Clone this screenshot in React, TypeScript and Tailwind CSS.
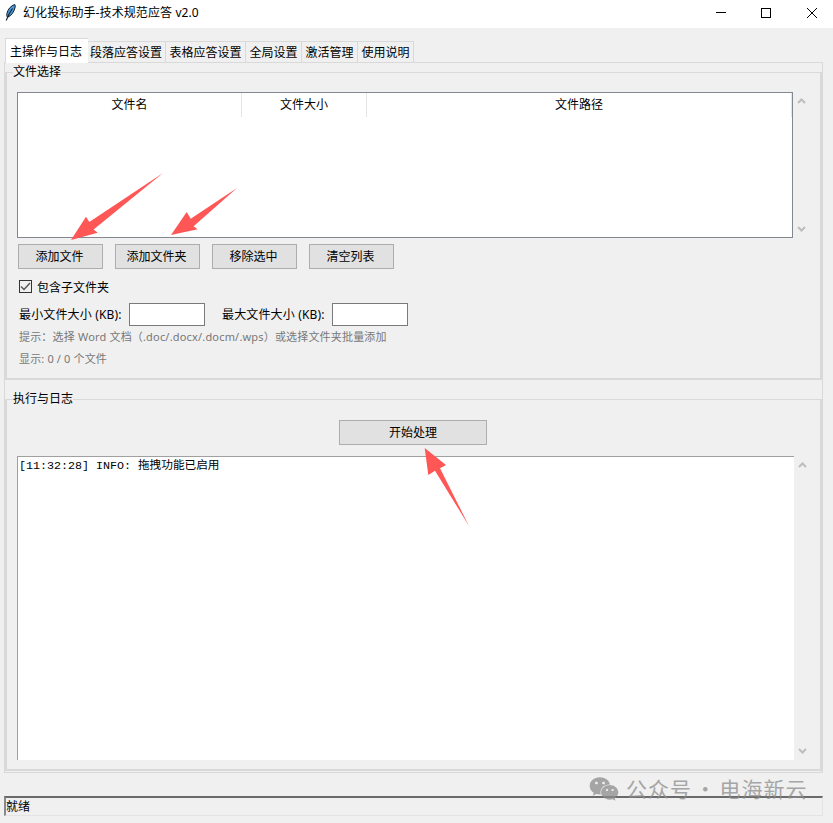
import { FaWeixin } from 'react-icons/fa';

const tabs = [
  { label: '段落应答设置', w: 'w-[78px] pr-[1px]' },
  { label: '表格应答设置', w: 'w-[80px]' },
  { label: '全局设置', w: 'w-[56px]' },
  { label: '激活管理', w: 'w-[56px]' },
  { label: '使用说明', w: 'w-[56px]' },
];

const fileButtons = ['添加文件', '添加文件夹', '移除选中', '清空列表'];

function ScrollArrows() {
  return (
    <div className="w-[17px] py-[6px] flex flex-col justify-between items-center">
      <svg width="9" height="6" viewBox="0 0 9 6" fill="none" stroke="#bdbdbd" strokeWidth="2">
        <path d="M1 5l3.5-3.5L8 5" />
      </svg>
      <svg width="9" height="6" viewBox="0 0 9 6" fill="none" stroke="#bdbdbd" strokeWidth="2">
        <path d="M1 1l3.5 3.5L8 1" />
      </svg>
    </div>
  );
}

function TkButton({ label, className }: { label: string; className: string }) {
  return (
    <button className={`h-[25px] bg-[#e1e1e1] border border-[#adadad] text-black text-center leading-[22px] ${className}`}>
      {label}
    </button>
  );
}

export default function App() {
  return (
    <div className="relative w-[833px] h-[823px] overflow-hidden bg-[#f0f0f0] text-[12px] text-black flex flex-col font-['Noto_Sans','Noto_Sans_CJK_SC',sans-serif]">
      {/* Title bar */}
      <div className="h-[28px] pb-[3px] bg-white flex items-center justify-between shrink-0">
        <div className="flex items-center pl-[5px]">
          <svg width="11" height="17" viewBox="0 0 11 17" className="mr-[7px]">
            <path d="M9.8 0.500C6 1.600 2.800 5.200 1.900 9.500c-.3 1.600-.1 3 .6 3.800C6.400 11.800 9 8 10.100 3.500c.2-1 .1-2.300-.3-3z" fill="#4d97d6" stroke="#10202e" strokeWidth="1" />
            <path d="M7.500 4.500C5 8 3 11.500 1.200 16.500" fill="none" stroke="#10202e" strokeWidth="1.100" />
          </svg>
          <span className="tracking-[0.1px]">幻化投标助手-技术规范应答 v2.0</span>
        </div>
        <div className="flex items-center gap-[35px] pr-[16px]">
          <div className="w-[10px] h-px bg-black" />
          <div className="w-[10px] h-[10px] border border-black" />
          <svg width="10" height="10" viewBox="0 0 10 10" stroke="#000" strokeWidth="1" fill="none" className="ml-px">
            <path d="M0 0l10 10M10 0L0 10" />
          </svg>
        </div>
      </div>

      {/* Tabs */}
      <div className="relative z-10 mt-[10px] ml-[5px] h-[24px] flex items-end shrink-0">
        <div className="w-[83px] pr-[2px] h-[25px] -mb-px bg-white border-t border-l border-[#d9d9d9] text-center leading-[26px]">主操作与日志</div>
        {tabs.map((tab) => (
          <div key={tab.label} className={`${tab.w} h-[21px] border-t border-r border-[#d9d9d9] text-center leading-[22px]`}>
            {tab.label}
          </div>
        ))}
      </div>

      {/* Notebook */}
      <div className="ml-[4px] w-[819px] h-[711px] border border-[#d9d9d9] pt-[9px] shrink-0">
        {/* File selection */}
        <div className="w-[817px] h-[308px] border-2 border-t border-[#d9d9d9] flex flex-col items-start">
          <span className="block h-[18px] leading-[18px] -mt-[10px] ml-[6px] bg-[#f0f0f0]">文件选择</span>
          <div className="flex mt-[11px] ml-[10px]">
            <div className="w-[776px] h-[146px] bg-white border border-[#83878f]">
              <div className="flex h-[24px] leading-[24px] text-center">
                <div className="w-[224px] border-r border-[#e5e5e5]">文件名</div>
                <div className="w-[125px] border-r border-[#e5e5e5]">文件大小</div>
                <div className="flex-1 border-r border-[#e5e5e5]">文件路径</div>
              </div>
            </div>
            <ScrollArrows />
          </div>
          <div className="flex gap-[12px] mt-[6px] ml-[11px]">
            {fileButtons.map((label) => (
              <TkButton key={label} label={label} className="w-[85px] pr-[2px]" />
            ))}
          </div>
          <label className="flex items-center gap-[5px] mt-[11px] ml-[12px] h-[13px]">
            <span className="w-[13px] h-[13px] border border-[#333] bg-[#f0f0f0] flex items-center justify-center">
              <svg width="11" height="9" viewBox="0 0 11 9" fill="none" stroke="#555" strokeWidth="1.400">
                <path d="M1 4.500l3 3 6-6.500" />
              </svg>
            </span>
            <span className="mt-[2px]">包含子文件夹</span>
          </label>
          <div className="flex items-center mt-[10px] ml-[12px] h-[23px] tracking-[0.15px]">
            <span className="w-[110px]">最小文件大小 (KB):</span>
            <div className="w-[76px] h-[23px] bg-white border border-[#7a7a7a]" />
            <span className="w-[110px] ml-[17px]">最大文件大小 (KB):</span>
            <div className="w-[76px] h-[23px] bg-white border border-[#7a7a7a]" />
          </div>
          <div className="mt-[2px] ml-[12px] h-[18px] leading-[18px] text-[11px] tracking-[0.18px] text-[#787878] whitespace-nowrap">提示：选择 Word 文档（.doc/.docx/.docm/.wps）或选择文件夹批量添加</div>
          <div className="mt-[4px] ml-[12px] h-[18px] leading-[18px] text-[11px] tracking-[0.15px] text-[#787878]">显示: 0 / 0 个文件</div>
        </div>

        {/* Run and log */}
        <div className="w-[817px] h-[372px] mt-[19px] border-2 border-t border-[#d9d9d9] flex flex-col items-start">
          <span className="block h-[18px] leading-[18px] -mt-[10px] ml-[6px] bg-[#f0f0f0]">执行与日志</span>
          <TkButton label="开始处理" className="w-[148px] mt-[12px] ml-[332px]" />
          <div className="flex mt-[11px] ml-[10px]">
            <div className="w-[777px] h-[304px] bg-white border-t border-l border-[#a0a0a0] pl-[1px] pt-[1px] text-[11.67px] leading-[16px] font-['Liberation_Mono','Noto_Sans_CJK_SC',monospace]">
              [11:32:28] INFO: 拖拽功能已启用
            </div>
            <ScrollArrows />
          </div>
        </div>
      </div>

      {/* Status bar */}
      <div className="ml-[4px] mt-[23px] w-[819px] h-[20px] border-t-2 border-l-2 border-r border-b border-t-[#6a6a6a] border-l-[#8a8a8a] border-r-[#e3e3e3] border-b-[#e3e3e3] leading-[18px] shrink-0">
        就绪
      </div>

      {/* Annotation arrows */}
      <svg className="absolute inset-0 pointer-events-none" width="833" height="823" fill="#ff5656">
        <polygon points="71,240 86,216.700 89.300,222 163,173 93.600,229.600 97.700,232.700" />
        <polygon points="171,235 186.700,212 190.700,218.700 237,188 193.600,226.300 197.700,229.300" />
        <polygon points="424.700,448 446,465 440,468.300 469,526 435,470.700 428.300,475" />
      </svg>

      {/* Watermark */}
      <div className="absolute left-[589px] top-[774px] flex items-center gap-[7px] text-[#8c8c8c] opacity-75 pointer-events-none">
        <FaWeixin size={30} />
        <span className="-mt-[2px] text-[21px] leading-[28px] tracking-[1px] [word-spacing:-3px] whitespace-nowrap font-['Noto_Sans_CJK_SC',sans-serif]">公众号 · 电海新云</span>
      </div>
    </div>
  );
}
